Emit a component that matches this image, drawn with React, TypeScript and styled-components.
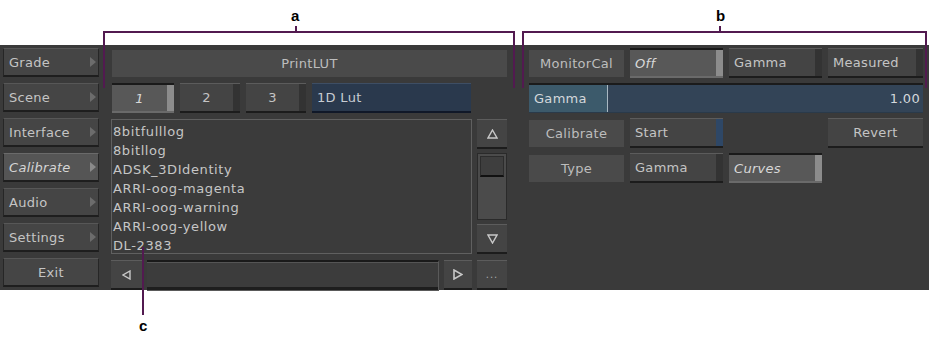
import React from "react";
import styled, { createGlobalStyle, css } from "styled-components";

const Global = createGlobalStyle`
  html, body { margin: 0; padding: 0; background: #ffffff; }
  body { font-family: "DejaVu Sans", "Liberation Sans", sans-serif; }
  * { box-sizing: border-box; }
`;

const Stage = styled.div`
  position: relative;
  width: 929px;
  height: 341px;
  background: #ffffff;
  overflow: hidden;
`;

const Panel = styled.div`
  margin-top: 45px;
  height: 245px;
  background: #3a3a3a;
  display: flex;
  align-items: flex-start;
  padding-left: 3px;
  font-family: "DejaVu Sans", sans-serif;
  font-size: 13px;
  color: #c4c4c4;
`;

/* ---------- left menu ---------- */
const Menu = styled.div`
  width: 96px;
  margin-top: 3px;
  display: flex;
  flex-direction: column;
  gap: 6px;
`;

const MenuButton = styled.div<{ $active?: boolean; $center?: boolean }>`
  position: relative;
  height: 29px;
  display: flex;
  align-items: center;
  justify-content: ${(p) => (p.$center ? "center" : "flex-start")};
  padding-left: ${(p) => (p.$center ? "0" : "5px")};
  padding-top: 1px;
  background: ${(p) => (p.$active ? "#555555" : "#454545")};
  border: 1px solid #262626;
  border-top-color: ${(p) => (p.$active ? "#6a6a6a" : "#575757")};
  border-bottom: 2px solid #1e1e1e;
  font-style: ${(p) => (p.$active ? "italic" : "normal")};
  letter-spacing: 0.3px;
  color: ${(p) => (p.$active ? "#d6d6d6" : "#c4c4c4")};
`;

const MenuArrow = styled.span<{ $active?: boolean }>`
  position: absolute;
  right: 2px;
  top: 8px;
  width: 0;
  height: 0;
  border-top: 5px solid transparent;
  border-bottom: 5px solid transparent;
  border-left: 6px solid ${(p) => (p.$active ? "#8a8a8a" : "#6c6c6c")};
`;

/* ---------- LUT section ---------- */
const Lut = styled.div`
  margin-left: 12px;
  width: 396px;
  margin-top: 5px;
  display: grid;
  grid-template-columns: 361px 30px;
  column-gap: 5px;
  grid-template-rows: 27px 30px 135px 30px;
  row-gap: 6px;
`;

const FlatLabel = styled.div<{ $span?: boolean }>`
  grid-column: ${(p) => (p.$span ? "1 / span 2" : "auto")};
  height: 27px;
  display: flex;
  align-items: center;
  justify-content: center;
  background: #4a4a4a;
  color: #bdbdbd;
  letter-spacing: 0.3px;
`;

const HeaderLabel = styled(FlatLabel)`
  margin-left: 1px;
`;

const TabRow = styled.div`
  grid-column: 1;
  display: flex;
  gap: 6px;
  padding-left: 1px;
  padding-right: 1px;
`;

const buttonBase = css`
  height: 30px;
  display: flex;
  align-items: center;
  white-space: nowrap;
`;

const Btn = styled.div<{
  $w?: number;
  $pressed?: boolean;
  $stripe?: "dark" | "light" | "blue" | "none";
  $align?: "left" | "center";
}>`
  ${buttonBase};
  width: ${(p) => (p.$w ? `${p.$w}px` : "auto")};
  flex: ${(p) => (p.$w ? "0 0 auto" : "1 1 auto")};
  justify-content: ${(p) => (p.$align === "left" ? "flex-start" : "center")};
  padding-left: ${(p) => (p.$align === "left" ? "5px" : "0")};
  padding-right: ${(p) => (p.$stripe && p.$stripe !== "none" ? "7px" : "0")};
  background: ${(p) => (p.$pressed ? "#585858" : "#444444")};
  border-top: ${(p) => (p.$pressed ? "2px solid #1a1a1a" : "1px solid #5c5c5c")};
  border-bottom: ${(p) => (p.$pressed ? "2px solid #6a6a6a" : "2px solid #1c1c1c")};
  box-shadow: ${(p) =>
    p.$stripe === "light"
      ? "inset -7px 0 0 #8c8c8c"
      : p.$stripe === "blue"
      ? "inset -7px 0 0 #2e4766"
      : p.$stripe === "dark"
      ? "inset -7px 0 0 #333333"
      : "none"};
  font-style: ${(p) => (p.$pressed ? "italic" : "normal")};
  letter-spacing: 0.3px;
  color: ${(p) => (p.$pressed ? "#d8d8d8" : "#c4c4c4")};
`;

const BlueField = styled.div`
  ${buttonBase};
  flex: 1 1 auto;
  padding-left: 5px;
  background: #2a394d;
  border-top: 1px solid #3e4e64;
  border-bottom: 2px solid #101828;
  color: #c8ccd2;
  letter-spacing: 0.3px;
`;

const ListBox = styled.div`
  grid-column: 1;
  border: 1px solid #606060;
  background: #3b3b3b;
  padding: 2px 0 0 1px;
  overflow: hidden;
`;

const ListItem = styled.div`
  height: 19px;
  line-height: 19px;
  color: #c6c6c6;
  letter-spacing: 0.6px;
  white-space: nowrap;
`;

const ScrollCol = styled.div`
  grid-column: 2;
  display: flex;
  flex-direction: column;
  gap: 4px;
`;

const IconBtn = styled.div`
  ${buttonBase};
  flex: 0 0 auto;
  width: 30px;
  justify-content: center;
  background: #444444;
  border-top: 1px solid #5c5c5c;
  border-bottom: 2px solid #1c1c1c;
  color: #bcbcbc;
`;

const ArrowBtn = styled(IconBtn)<{ $w?: number }>`
  width: ${(p) => (p.$w ? `${p.$w}px` : "30px")};
`;

const Track = styled.div`
  flex: 1 1 auto;
  background: #4b4b4b;
  border: 1px solid #2a2a2a;
  padding: 2px;
`;

const Thumb = styled.div`
  height: 21px;
  background: #3e3e3e;
  border: 1px solid #2c2c2c;
  border-bottom: 2px solid #111111;
`;

const NavRow = styled.div`
  grid-column: 1;
  display: flex;
  gap: 5px;
`;

const SunkenField = styled.div`
  flex: 1 1 auto;
  height: 31px;
  background: #3c3c3c;
  border-top: 2px solid #1a1a1a;
  border-bottom: 1px solid #5a5a5a;
  border-right: 1px solid #5a5a5a;
  box-shadow: inset 0 1px 0 #555555, inset 0 -3px 0 #1e1e1e;
`;

const DotsBtn = styled(IconBtn)`
  grid-column: 2;
  align-items: flex-end;
  padding-bottom: 8px;
  font-size: 10px;
  line-height: 10px;
  letter-spacing: 1px;
  color: #a8a8a8;
`;

/* ---------- right section ---------- */
const Right = styled.div`
  margin-left: 22px;
  width: 394px;
  margin-top: 3px;
  display: grid;
  grid-template-columns: 95px 93px 93px 95px;
  column-gap: 6px;
  grid-template-rows: 30px 30px 30px 30px;
  row-gap: 5px;
  align-items: center;
`;

const Cell = styled.div`
  display: flex;
`;

const Slider = styled.div`
  grid-column: 1 / span 4;
  position: relative;
  height: 30px;
  background: #334457;
  border-top: 2px solid #1b1b1b;
  border-bottom: 1px solid #2a3a4a;
  display: flex;
  align-items: center;
  justify-content: space-between;
  padding: 0 3px 0 5px;
  color: #d4d8dc;
  letter-spacing: 0.3px;
`;

const SliderFill = styled.div`
  position: absolute;
  left: 0;
  top: 0;
  bottom: 0;
  background: #3c5a6b;
  border-right: 1px solid #a9b8c2;
`;

const SliderText = styled.span`
  position: relative;
`;

/* ---------- annotations ---------- */
const Callouts = styled.svg`
  position: absolute;
  left: 0;
  top: 0;
  pointer-events: none;
`;

const Letter = styled.span<{ $x: number; $y: number }>`
  position: absolute;
  left: ${(p) => p.$x}px;
  top: ${(p) => p.$y}px;
  font-family: "Liberation Sans", Arial, sans-serif;
  font-weight: bold;
  font-size: 15px;
  line-height: 15px;
  color: #000000;
`;

const UpIcon = () => (
  <svg width="11" height="10" viewBox="0 0 11 10">
    <polygon points="5.5,1 10,9 1,9" fill="none" stroke="#c8c8c8" strokeWidth="1.4" />
  </svg>
);
const DownIcon = () => (
  <svg width="11" height="10" viewBox="0 0 11 10">
    <polygon points="1,1 10,1 5.5,9" fill="none" stroke="#c8c8c8" strokeWidth="1.4" />
  </svg>
);
const LeftIcon = () => (
  <svg width="9" height="10" viewBox="0 0 9 10">
    <polygon points="8,1 8,9 1,5" fill="none" stroke="#c8c8c8" strokeWidth="1.4" />
  </svg>
);
const RightIcon = () => (
  <svg width="10" height="11" viewBox="0 0 10 11">
    <polygon points="1,1 1,10 9,5.5" fill="none" stroke="#c8c8c8" strokeWidth="1.6" />
  </svg>
);

const menu = [
  { label: "Grade", arrow: true },
  { label: "Scene", arrow: true },
  { label: "Interface", arrow: true },
  { label: "Calibrate", arrow: true, active: true },
  { label: "Audio", arrow: true },
  { label: "Settings", arrow: true },
];

const luts = [
  "8bitfulllog",
  "8bitllog",
  "ADSK_3DIdentity",
  "ARRI-oog-magenta",
  "ARRI-oog-warning",
  "ARRI-oog-yellow",
  "DL-2383",
];

const gamma = 1.0;
const gammaFill = 79;

export default function App() {
  return (
    <Stage>
      <Global />
      <Panel>
        <Menu>
          {menu.map((m) => (
            <MenuButton key={m.label} $active={m.active}>
              {m.label}
              {m.arrow && <MenuArrow $active={m.active} />}
            </MenuButton>
          ))}
          <MenuButton $center>Exit</MenuButton>
        </Menu>

        <Lut>
          <HeaderLabel $span>PrintLUT</HeaderLabel>
          <TabRow>
            <Btn $w={62} $pressed $stripe="light">1</Btn>
            <Btn $w={60} $stripe="dark">2</Btn>
            <Btn $w={60} $stripe="dark">3</Btn>
            <BlueField>1D Lut</BlueField>
          </TabRow>
          <div />
          <ListBox>
            {luts.map((l) => (
              <ListItem key={l}>{l}</ListItem>
            ))}
          </ListBox>
          <ScrollCol>
            <IconBtn><UpIcon /></IconBtn>
            <Track><Thumb /></Track>
            <IconBtn><DownIcon /></IconBtn>
          </ScrollCol>
          <NavRow>
            <ArrowBtn $w={31}><LeftIcon /></ArrowBtn>
            <SunkenField />
            <ArrowBtn $w={28}><RightIcon /></ArrowBtn>
          </NavRow>
          <DotsBtn>...</DotsBtn>
        </Lut>

        <Right>
          <FlatLabel>MonitorCal</FlatLabel>
          <Cell><Btn $pressed $stripe="light" $align="left">Off</Btn></Cell>
          <Cell><Btn $stripe="dark" $align="left">Gamma</Btn></Cell>
          <Cell><Btn $stripe="dark" $align="left">Measured</Btn></Cell>

          <Slider>
            <SliderFill style={{ width: `${gammaFill}px` }} />
            <SliderText>Gamma</SliderText>
            <SliderText>{gamma.toFixed(2)}</SliderText>
          </Slider>

          <FlatLabel>Calibrate</FlatLabel>
          <Cell><Btn $stripe="blue" $align="left">Start</Btn></Cell>
          <div />
          <Cell><Btn $stripe="none">Revert</Btn></Cell>

          <FlatLabel>Type</FlatLabel>
          <Cell><Btn $stripe="dark" $align="left">Gamma</Btn></Cell>
          <Cell><Btn $pressed $stripe="light" $align="left">Curves</Btn></Cell>
          <div />
        </Right>
      </Panel>

      <Callouts width="929" height="341" viewBox="0 0 929 341">
        <g stroke="#521a50" strokeWidth="2" fill="none">
          <polyline points="104,88 104,32 514,32 514,88" />
          <line x1="296" y1="26" x2="296" y2="32" />
          <polyline points="523,88 523,32 926,32 926,88" />
          <line x1="720" y1="26" x2="720" y2="32" />
          <line x1="143" y1="247" x2="143" y2="315" />
        </g>
      </Callouts>
      <Letter $x={291} $y={8}>a</Letter>
      <Letter $x={716} $y={8}>b</Letter>
      <Letter $x={139} $y={318}>c</Letter>
    </Stage>
  );
}
